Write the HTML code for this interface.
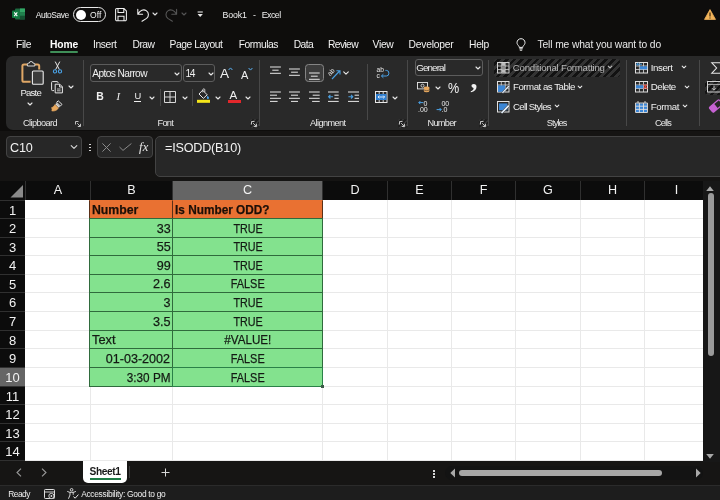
<!DOCTYPE html>
<html><head><meta charset="utf-8"><title>Book1 - Excel</title>
<style>
*{box-sizing:border-box;margin:0;padding:0}
html,body{width:720px;height:500px;overflow:hidden;background:#0e0d0c;font-family:"Liberation Sans",sans-serif;color:#fff}
#app{will-change:transform;position:relative;width:720px;height:500px;overflow:hidden;background:#0e0d0c}
.t{position:absolute;white-space:nowrap;line-height:1}
svg{position:absolute;overflow:visible}
/* grid */
#grid{position:absolute;left:0;top:181px;width:703px;height:280px;background:#fff;overflow:hidden}
.corner{position:absolute;left:0;top:0;width:25px;height:19px;background:#0c0c0c}
.corner svg{left:0;top:0}
.ch{position:absolute;top:0;height:19px;background:#0c0c0c;color:#f2f2f2;font-size:12.6px;text-align:center;line-height:19px;border-left:1px solid #303030}
.ch.sel{background:#656565}
.rh{position:absolute;left:0;width:25px;background:#0c0c0c;color:#f2f2f2;font-size:13px;text-align:center;border-top:1px solid #303030}
.rh.sel{background:#656565}
.vl{position:absolute;width:1px;background:#e9e9e9;top:19px;bottom:0}
.hl{position:absolute;height:1px;background:#e9e9e9;left:25px;right:0}
.c{position:absolute;font-size:13.3px;color:#141a14;white-space:nowrap;overflow:hidden;border:1px solid #2f6a3c;padding:0 1.5px 0 2px}
.c span{display:inline-block;-webkit-text-stroke:0.25px #141a14}
.c.hd{background:#e97132;color:#1f0d05;font-weight:bold;border-top-color:#e97132;border-color:#5a3018;border-top-color:#e97132}
.c.gr{background:#83e28e}
.c.r{text-align:right}.c.m{text-align:center}.c.l{text-align:left}
.selbox{position:absolute;border:1px solid #2a8148}
.handle{position:absolute;width:3px;height:3px;background:#3c5a48}
/* ribbon */
.rbg{position:absolute;left:6px;top:55.5px;width:730px;height:74.5px;background:#292929;border-radius:7px 0 0 7px}
.sep{position:absolute;width:1px;background:#484848}
.cbx{position:absolute;border:1px solid #5c5c5c;border-radius:3px;background:#292929}
.cbx.selbtn{background:#3c3c3c;border-color:#858585;border-radius:3.5px}
.hatch{position:absolute;border-radius:3px;background:repeating-linear-gradient(135deg,#333 0 2.8px,#121212 2.8px 5.4px)}
.fbox{position:absolute;background:#272727;border:1px solid #434343;border-radius:4px}
.sbbg{position:absolute;left:0;top:461px;width:720px;height:24px;background:#161514}
.stab{position:absolute;left:83px;top:461px;width:44px;height:22px;background:#fff;border-radius:0 0 5px 5px}
.stbg{position:absolute;left:0;top:485px;width:720px;height:15px;background:#1d1d1d;border-top:1px solid #2b2b2b}
.hatch2{position:absolute;border-radius:2px;background:repeating-linear-gradient(135deg,#353535 0 1.6px,#1f1f1f 1.6px 3.2px)}

</style></head><body><div id="app">
<div id="title">
<svg style="left:12px;top:8px" width="13" height="12" viewBox="0 0 13 12"><rect x="3" y="0.5" width="10" height="11" rx="1" fill="#1d6b41"/><rect x="8" y="0.5" width="5" height="3.7" fill="#33a867"/><rect x="8" y="4.2" width="5" height="3.6" fill="#21824e"/><rect x="8" y="7.8" width="5" height="3.7" fill="#155232"/><rect x="0" y="2.5" width="7.5" height="7.5" rx="0.8" fill="#107c41"/><path d="M2.2 4.3 L5.3 8.2 M5.3 4.3 L2.2 8.2" stroke="#fff" stroke-width="1.1"/></svg>
<div class="t" style="left:35.8px;top:11.4px;font-size:8.5px;color:#f0f0f0;letter-spacing:-0.48px;">AutoSave</div>
<div style="position:absolute;left:73px;top:7px;width:33px;height:15px;border:1px solid #e8e8e8;border-radius:8px"></div>
<div style="position:absolute;left:76px;top:9.5px;width:10px;height:10px;border-radius:5px;background:#fff"></div>
<div class="t" style="left:90.0px;top:11.4px;font-size:8.5px;color:#f0f0f0;letter-spacing:0.11px;">Off</div>
<svg style="left:115px;top:7.5px" width="12" height="13.4" viewBox="0 0 12 13.4"><path d="M0.6 1.8 a1.2 1.2 0 0 1 1.2 -1.2 H9 L11.4 3 V11.6 a1.2 1.2 0 0 1 -1.2 1.2 H1.8 a1.2 1.2 0 0 1 -1.2 -1.2 Z M3 0.8 V4.6 H8.8 V0.8 M3 12.6 V8.2 H9 V12.6" fill="none" stroke="#f0f0f0" stroke-width="1.05"/></svg>
<svg style="left:136.6px;top:7.5px" width="12.4" height="13.6" viewBox="0 0 12.4 13.6"><path d="M0.8 1.4 V6.2 H5.6 M1.2 5.8 C3 2.4 6.6 1 9.2 2.6 C12.2 4.4 12 8.4 9.6 10.4 L5 13.2" fill="none" stroke="#f0f0f0" stroke-width="1.1" stroke-linecap="round" stroke-linejoin="round"/></svg>
<svg style="left:150.7px;top:10.4px" width="8" height="8" viewBox="0 0 8 8"><path d="M2 3.0 L4 5.0 L6 3.0" fill="none" stroke="#e0e0e0" stroke-width="1.1" stroke-linecap="round" stroke-linejoin="round"/></svg>
<svg style="left:165.4px;top:7.5px" width="12.4" height="13.6" viewBox="0 0 12.4 13.6"><path d="M11.6 1.4 V6.2 H6.8 M11.2 5.8 C9.4 2.4 5.8 1 3.2 2.6 C0.2 4.4 0.4 8.4 2.8 10.4 L7.4 13.2" fill="none" stroke="#555" stroke-width="1.1" stroke-linecap="round" stroke-linejoin="round"/></svg>
<svg style="left:179.8px;top:10.4px" width="8" height="8" viewBox="0 0 8 8"><path d="M2 3.0 L4 5.0 L6 3.0" fill="none" stroke="#555" stroke-width="1.1" stroke-linecap="round" stroke-linejoin="round"/></svg>
<svg style="left:196.6px;top:11px" width="6.4" height="6.4" viewBox="0 0 6.4 6.4"><path d="M0.6 1 H5.8" stroke="#e8e8e8" stroke-width="1.1"/><path d="M0.6 3 H5.8 L3.2 6 Z" fill="#e8e8e8"/></svg>
<div class="t" style="left:222.5px;top:11.3px;font-size:8.8px;color:#f0f0f0;letter-spacing:-0.13px;">Book1</div>
<div class="t" style="left:253.0px;top:11.3px;font-size:8.8px;color:#f0f0f0;letter-spacing:0.00px;">-</div>
<div class="t" style="left:261.8px;top:11.3px;font-size:8.8px;color:#f0f0f0;letter-spacing:-0.54px;">Excel</div>
<svg style="left:704px;top:8.5px" width="12" height="11" viewBox="0 0 12 11"><path d="M6 0.6 L11.5 10.4 H0.5 Z" fill="#f2b45a" stroke="#f2b45a" stroke-width="0.8" stroke-linejoin="round"/><path d="M6 3.6 V7.4 M6 8.4 V9.5" stroke="#2a1a05" stroke-width="1.1"/></svg>
</div>
<div id="tabs">
<div class="t" style="left:16.0px;top:40.1px;font-size:10.3px;color:#f2f2f2;letter-spacing:-0.40px;">File</div>
<div class="t" style="left:93.0px;top:40.1px;font-size:10.3px;color:#f2f2f2;letter-spacing:-0.38px;">Insert</div>
<div class="t" style="left:132.5px;top:40.1px;font-size:10.3px;color:#f2f2f2;letter-spacing:-0.51px;">Draw</div>
<div class="t" style="left:169.5px;top:40.1px;font-size:10.3px;color:#f2f2f2;letter-spacing:-0.44px;">Page Layout</div>
<div class="t" style="left:238.8px;top:40.1px;font-size:10.3px;color:#f2f2f2;letter-spacing:-0.47px;">Formulas</div>
<div class="t" style="left:293.8px;top:40.1px;font-size:10.3px;color:#f2f2f2;letter-spacing:-0.64px;">Data</div>
<div class="t" style="left:328.0px;top:40.1px;font-size:10.3px;color:#f2f2f2;letter-spacing:-0.63px;">Review</div>
<div class="t" style="left:372.5px;top:40.1px;font-size:10.3px;color:#f2f2f2;letter-spacing:-0.29px;">View</div>
<div class="t" style="left:408.5px;top:40.1px;font-size:10.3px;color:#f2f2f2;letter-spacing:-0.22px;">Developer</div>
<div class="t" style="left:469.0px;top:40.1px;font-size:10.3px;color:#f2f2f2;letter-spacing:-0.30px;">Help</div>
<div class="t" style="left:50.0px;top:40.1px;font-size:10.3px;color:#ffffff;letter-spacing:-0.15px;font-weight:bold;">Home</div>
<div style="position:absolute;left:50px;top:51px;width:28px;height:2px;border-radius:1px;background:#3f8f58"></div>
<svg style="left:516px;top:38px" width="10" height="13" viewBox="0 0 10 13"><path d="M5 0.7 C2.6 0.7 1 2.5 1 4.6 C1 6 1.8 7 2.6 7.8 C3 8.3 3.2 8.8 3.2 9.4 H6.8 C6.8 8.8 7 8.3 7.4 7.8 C8.2 7 9 6 9 4.6 C9 2.5 7.4 0.7 5 0.7 Z M3.3 10.8 H6.7 M3.8 12.2 H6.2" fill="none" stroke="#f0f0f0" stroke-width="1"/></svg>
<div class="t" style="left:537.5px;top:40.1px;font-size:10.3px;color:#e8e8e8;letter-spacing:-0.13px;">Tell me what you want to do</div>
</div>
<div id="ribbon">
<div class="rbg"></div>
<svg style="left:20.5px;top:61px" width="23" height="24" viewBox="0 0 23 24"><path d="M6.6 3.4 H3 a1.6 1.6 0 0 0 -1.6 1.6 V19.2 a1.6 1.6 0 0 0 1.6 1.6 H9.6" fill="none" stroke="#dfa766" stroke-width="2"/><path d="M13.6 3.4 H16.6 a1.6 1.6 0 0 1 1.6 1.6 V8.6" fill="none" stroke="#dfa766" stroke-width="2"/><path d="M6.4 5 V3.2 a1 1 0 0 1 1 -1 H8.2 a1.9 1.7 0 0 1 3.8 0 H12.8 a1 1 0 0 1 1 1 V5 Z" fill="#292929" stroke="#d8d8d8" stroke-width="1"/><rect x="11.4" y="10" width="10.8" height="13.2" rx="1" fill="#3c3c3c" stroke="#ececec" stroke-width="1.1"/></svg>
<div class="t" style="left:20.5px;top:88.4px;font-size:9.6px;color:#f0f0f0;letter-spacing:-0.81px;">Paste</div>
<svg style="left:26px;top:100px" width="8" height="8" viewBox="0 0 8 8"><path d="M2 3.0 L4 5.0 L6 3.0" fill="none" stroke="#e8e8e8" stroke-width="1.1" stroke-linecap="round" stroke-linejoin="round"/></svg>
<svg style="left:53px;top:61px" width="9" height="13" viewBox="0 0 9 13"><path d="M2.2 0.6 L6.4 8.6 M6.8 0.6 L2.6 8.6" stroke="#e8e8e8" stroke-width="1" fill="none"/><circle cx="2" cy="10.4" r="1.6" fill="none" stroke="#4aa3e8" stroke-width="1.1"/><circle cx="7" cy="10.4" r="1.6" fill="none" stroke="#4aa3e8" stroke-width="1.1"/></svg>
<svg style="left:51px;top:80.5px" width="12" height="12.5" viewBox="0 0 12 12.5"><path d="M3 9.6 H1.4 a0.8 0.8 0 0 1 -0.8 -0.8 V1.4 a0.8 0.8 0 0 1 0.8 -0.8 H6.2 a0.8 0.8 0 0 1 0.8 0.8 V2" fill="none" stroke="#e8e8e8" stroke-width="1"/><path d="M4.2 3.2 H8.8 L11.4 5.8 V11.9 H4.2 Z M8.6 3.4 V6 H11.2" fill="none" stroke="#e8e8e8" stroke-width="1"/><path d="M6 8 H9.6 M6 9.8 H9.6" stroke="#e8e8e8" stroke-width="0.8"/></svg>
<svg style="left:67px;top:83px" width="8" height="8" viewBox="0 0 8 8"><path d="M2 3.0 L4 5.0 L6 3.0" fill="none" stroke="#e8e8e8" stroke-width="1.1" stroke-linecap="round" stroke-linejoin="round"/></svg>
<svg style="left:51px;top:100px" width="12" height="12" viewBox="0 0 12 12"><path d="M7.2 0.8 L11 4.4 L9.4 6 L5.6 2.4 Z" fill="none" stroke="#e8e8e8" stroke-width="1"/><path d="M5.4 3 L9 6.6 L7.8 7.8 L4.2 4.2 Z" fill="#d8d8d8"/><path d="M4 4.6 L7.4 8 C6.4 10 4 11.4 0.8 11 C1.6 9.6 0.6 8.6 0.6 7.6 C1.8 7.4 3 6.2 4 4.6 Z" fill="#e7a85e" stroke="#e7a85e" stroke-width="0.6"/></svg>
<div class="t" style="left:23.0px;top:118.7px;font-size:9.2px;color:#e8e8e8;letter-spacing:-0.60px;">Clipboard</div>
<svg style="left:75px;top:120.5px" width="6" height="6" viewBox="0 0 6 6"><path d="M0.5 3.5 V0.5 H3.5 M2.2 2.2 L5.2 5.2 M5.5 2.8 V5.5 H2.8" fill="none" stroke="#d4d4d4" stroke-width="0.9"/></svg>
<div class="sep" style="left:83px;top:60px;height:66px"></div>
<div class="cbx" style="left:90px;top:64px;width:92px;height:18px"></div>
<div class="t" style="left:92.2px;top:69.2px;font-size:10.2px;color:#f0f0f0;letter-spacing:-0.58px;">Aptos Narrow</div>
<svg style="left:172.5px;top:69.5px" width="8" height="8" viewBox="0 0 8 8"><path d="M2 3.0 L4 5.0 L6 3.0" fill="none" stroke="#e8e8e8" stroke-width="1.1" stroke-linecap="round" stroke-linejoin="round"/></svg>
<div class="cbx" style="left:183px;top:64px;width:32px;height:18px"></div>
<div class="t" style="left:185.6px;top:69.2px;font-size:10.2px;color:#f0f0f0;letter-spacing:-1.47px;">14</div>
<svg style="left:206.5px;top:69.5px" width="8" height="8" viewBox="0 0 8 8"><path d="M2 3.0 L4 5.0 L6 3.0" fill="none" stroke="#e8e8e8" stroke-width="1.1" stroke-linecap="round" stroke-linejoin="round"/></svg>
<div class="t" style="left:220.0px;top:66.5px;font-size:13.6px;color:#f0f0f0;letter-spacing:-0.27px;">A</div>
<svg style="left:228.2px;top:66.8px" width="5" height="4" viewBox="0 0 5 4"><path d="M0.6 3 L2.5 0.9 L4.4 3" fill="none" stroke="#5ab0f0" stroke-width="1"/></svg>
<div class="t" style="left:241.0px;top:69.5px;font-size:11px;color:#f0f0f0;letter-spacing:-0.34px;">A</div>
<svg style="left:248px;top:67.3px" width="5" height="4" viewBox="0 0 5 4"><path d="M0.6 1 L2.5 3.1 L4.4 1" fill="none" stroke="#5ab0f0" stroke-width="1"/></svg>
<div class="t" style="left:96.2px;top:92.0px;font-size:10.4px;color:#f0f0f0;letter-spacing:-1.71px;font-weight:bold;">B</div>
<div class="t" style="left:116.6px;top:91.9px;font-size:10.6px;color:#f0f0f0;letter-spacing:0.00px;font-style:italic;font-family:'Liberation Serif',serif;">I</div>
<div class="t" style="left:134.6px;top:92.0px;font-size:9.3px;color:#f0f0f0;letter-spacing:0.00px;">U</div>
<div style="position:absolute;left:134px;top:101px;width:6.8px;height:1px;background:#f0f0f0"></div>
<svg style="left:148px;top:93.5px" width="8" height="8" viewBox="0 0 8 8"><path d="M2 3.0 L4 5.0 L6 3.0" fill="none" stroke="#e8e8e8" stroke-width="1.1" stroke-linecap="round" stroke-linejoin="round"/></svg>
<div class="sep" style="left:160px;top:89px;height:17px"></div>
<svg style="left:164.2px;top:91px" width="12" height="12" viewBox="0 0 12 12"><path d="M0.5 0.5 H11.5 V11.5 H0.5 Z M6 0.5 V11.5 M0.5 6 H11.5" fill="none" stroke="#d8d8d8" stroke-width="1"/><path d="M2.5 0.5 H4 M8 0.5 H9.5" stroke="#292929" stroke-width="0"/></svg>
<svg style="left:181px;top:93.5px" width="8" height="8" viewBox="0 0 8 8"><path d="M2 3.0 L4 5.0 L6 3.0" fill="none" stroke="#e8e8e8" stroke-width="1.1" stroke-linecap="round" stroke-linejoin="round"/></svg>
<div class="sep" style="left:192px;top:89px;height:17px"></div>
<svg style="left:197px;top:88.9px" width="13.5" height="14" viewBox="0 0 13.5 14"><path d="M5.6 1.2 L10.2 5.8 L6.4 9.4 L2 5 Z" fill="none" stroke="#e8e8e8" stroke-width="1" stroke-linejoin="round"/><path d="M5.8 3.4 V0.8 a1 1 0 0 1 2 0 V3" fill="none" stroke="#e8e8e8" stroke-width="0.8"/><path d="M10.6 6.4 C11.6 7.8 12 8.4 12 9 a1.1 1.1 0 0 1 -2.2 0 C9.8 8.4 10 7.8 10.6 6.4 Z" fill="#4aa3e8"/><rect x="0" y="10.8" width="13" height="3" fill="#f5e61a"/></svg>
<svg style="left:213.5px;top:93.5px" width="8" height="8" viewBox="0 0 8 8"><path d="M2 3.0 L4 5.0 L6 3.0" fill="none" stroke="#e8e8e8" stroke-width="1.1" stroke-linecap="round" stroke-linejoin="round"/></svg>
<div class="t" style="left:229.5px;top:90.0px;font-size:11.5px;color:#f0f0f0;letter-spacing:1.33px;">A</div>
<div style="position:absolute;left:228px;top:99.7px;width:12.6px;height:3px;background:#e2272b"></div>
<svg style="left:244px;top:93.5px" width="8" height="8" viewBox="0 0 8 8"><path d="M2 3.0 L4 5.0 L6 3.0" fill="none" stroke="#e8e8e8" stroke-width="1.1" stroke-linecap="round" stroke-linejoin="round"/></svg>
<div class="t" style="left:157.5px;top:118.7px;font-size:9.2px;color:#e8e8e8;letter-spacing:-0.73px;">Font</div>
<div class="hatch2" style="left:249.5px;top:119.0px;width:9px;height:9px"></div><svg style="left:251px;top:120.5px" width="6" height="6" viewBox="0 0 6 6"><path d="M0.5 3.5 V0.5 H3.5 M2.2 2.2 L5.2 5.2 M5.5 2.8 V5.5 H2.8" fill="none" stroke="#d4d4d4" stroke-width="0.9"/></svg>
<div class="sep" style="left:259px;top:60px;height:66px"></div>
<svg style="left:269.6px;top:66.4px" width="11" height="8" viewBox="0 0 11 8"><path d="M0.0 1.0 h10.9 M2.3 4.2 h6.3 M0.0 7.3 h10.9 " stroke="#e8e8e8" stroke-width="1.0" fill="none"/></svg>
<svg style="left:289px;top:68.4px" width="11" height="8" viewBox="0 0 11 8"><path d="M0.0 1.0 h10.9 M2.1 4.2 h6.8 M0.0 7.3 h10.9 " stroke="#e8e8e8" stroke-width="1.0" fill="none"/></svg>
<div class="cbx selbtn" style="left:305.3px;top:64.2px;width:18.4px;height:17.8px"></div>
<svg style="left:309px;top:71.6px" width="11" height="8" viewBox="0 0 11 8"><path d="M0.0 1.0 h10.7 M1.9 4.2 h6.8 M0.0 7.3 h10.7 " stroke="#e8e8e8" stroke-width="1.0" fill="none"/></svg>
<svg style="left:328px;top:66.5px" width="13" height="13" viewBox="0 0 13 13"><text x="0.2" y="7.4" font-family="Liberation Sans, sans-serif" font-size="6.6" fill="#e8e8e8" transform="rotate(-50 3.2 6)">ab</text><path d="M4 12 L11.6 4 M12 7.4 V3.8 H8.4" fill="none" stroke="#4a9fe0" stroke-width="1.1"/></svg>
<svg style="left:342.4px;top:69.4px" width="8" height="8" viewBox="0 0 8 8"><path d="M1.7000000000000002 2.85 L4 5.15 L6.3 2.85" fill="none" stroke="#e8e8e8" stroke-width="1.1" stroke-linecap="round" stroke-linejoin="round"/></svg>
<svg style="left:269.6px;top:91px" width="11" height="12" viewBox="0 0 11 12"><path d="M0.0 1.0 h10.9 M0.0 4.2 h7 M0.0 7.3 h10.9 M0.0 10.4 h7.6 " stroke="#e8e8e8" stroke-width="1.0" fill="none"/></svg>
<svg style="left:289px;top:91px" width="11" height="12" viewBox="0 0 11 12"><path d="M0.0 1.0 h10.9 M2.0 4.2 h7 M0.0 7.3 h10.9 M2.0 10.4 h7 " stroke="#e8e8e8" stroke-width="1.0" fill="none"/></svg>
<svg style="left:309px;top:91px" width="11" height="12" viewBox="0 0 11 12"><path d="M0.0 1.0 h10.7 M3.7 4.2 h7 M0.0 7.3 h10.7 M3.1 10.4 h7.6 " stroke="#e8e8e8" stroke-width="1.0" fill="none"/></svg>
<svg style="left:328.4px;top:91px" width="11" height="12" viewBox="0 0 11 12"><path d="M0.0 1.0 h10.7 " stroke="#e8e8e8" stroke-width="1.0" fill="none"/><path d="M6.4 4.2 h4.3 M6.4 7.3 h4.3 " stroke="#e8e8e8" stroke-width="1.0" fill="none"/><path d="M0.0 10.4 h10.7 " stroke="#e8e8e8" stroke-width="1.0" fill="none"/><path d="M5 5.7 H0.6 M2.4 3.9 L0.6 5.7 L2.4 7.5" fill="none" stroke="#4a9fe0" stroke-width="1.1"/></svg>
<svg style="left:348px;top:91px" width="11" height="12" viewBox="0 0 11 12"><path d="M0.0 1.0 h11 " stroke="#e8e8e8" stroke-width="1.0" fill="none"/><path d="M6.6 4.2 h4.4 M6.6 7.3 h4.4 " stroke="#e8e8e8" stroke-width="1.0" fill="none"/><path d="M0.0 10.4 h11 " stroke="#e8e8e8" stroke-width="1.0" fill="none"/><path d="M0.4 5.7 H4.8 M3 3.9 L4.8 5.7 L3 7.5" fill="none" stroke="#4a9fe0" stroke-width="1.1"/></svg>
<div class="t" style="left:310.0px;top:118.7px;font-size:9.2px;color:#e8e8e8;letter-spacing:-0.60px;">Alignment</div>
<div class="sep" style="left:367px;top:64px;height:56px"></div>
<svg style="left:376px;top:66.5px" width="13" height="14" viewBox="0 0 13 14"><text x="0.5" y="5.4" font-family="Liberation Sans, sans-serif" font-size="6.6" fill="#e8e8e8">ab</text><text x="0.5" y="11.2" font-family="Liberation Sans, sans-serif" font-size="6.6" fill="#e8e8e8">c</text><path d="M9.4 3.4 H10.4 a1.8 2 0 0 1 0 5.6 H5.6 M7.4 7.2 L5.4 9 L7.4 10.8" fill="none" stroke="#4aa3e8" stroke-width="1"/></svg>
<svg style="left:375px;top:91px" width="12.5" height="12" viewBox="0 0 12.5 12"><rect x="0.5" y="0.5" width="11.5" height="11" fill="none" stroke="#e8e8e8" stroke-width="1"/><path d="M4.2 0.5 V3 M8.2 0.5 V3 M4.2 9 V11.5 M8.2 9 V11.5" stroke="#e8e8e8" stroke-width="0.9"/><rect x="1" y="3" width="10.5" height="6" fill="#2f7fd0"/><path d="M3 6 H9.6 M4.4 4.6 L3 6 L4.4 7.4 M8.2 4.6 L9.6 6 L8.2 7.4" fill="none" stroke="#e8f2ff" stroke-width="0.9"/></svg>
<svg style="left:391px;top:93.5px" width="8" height="8" viewBox="0 0 8 8"><path d="M2 3.0 L4 5.0 L6 3.0" fill="none" stroke="#e8e8e8" stroke-width="1.1" stroke-linecap="round" stroke-linejoin="round"/></svg>
<div class="hatch2" style="left:397.5px;top:119.0px;width:9px;height:9px"></div><svg style="left:399px;top:120.5px" width="6" height="6" viewBox="0 0 6 6"><path d="M0.5 3.5 V0.5 H3.5 M2.2 2.2 L5.2 5.2 M5.5 2.8 V5.5 H2.8" fill="none" stroke="#d4d4d4" stroke-width="0.9"/></svg>
<div class="sep" style="left:407px;top:60px;height:66px"></div>
<div class="cbx" style="left:414.5px;top:59px;width:68px;height:16.5px"></div>
<div class="t" style="left:416.2px;top:63.0px;font-size:9.8px;color:#f0f0f0;letter-spacing:-0.87px;">General</div>
<svg style="left:473.5px;top:63.5px" width="8" height="8" viewBox="0 0 8 8"><path d="M2 3.0 L4 5.0 L6 3.0" fill="none" stroke="#e8e8e8" stroke-width="1.1" stroke-linecap="round" stroke-linejoin="round"/></svg>
<svg style="left:417px;top:81.5px" width="13" height="11" viewBox="0 0 13 11"><rect x="0.5" y="0.5" width="10" height="6.4" fill="none" stroke="#e8e8e8" stroke-width="0.9"/><circle cx="5.5" cy="3.7" r="1.5" fill="none" stroke="#e8e8e8" stroke-width="0.8"/><ellipse cx="9.6" cy="5.6" rx="2.8" ry="1.2" fill="#e7a85e"/><path d="M6.8 5.6 V9 a2.8 1.2 0 0 0 5.6 0 V5.6" fill="#e7a85e"/><path d="M6.8 7.4 a2.8 1.2 0 0 0 5.6 0" fill="none" stroke="#292929" stroke-width="0.5"/></svg>
<svg style="left:433.5px;top:83.5px" width="8" height="8" viewBox="0 0 8 8"><path d="M2 3.0 L4 5.0 L6 3.0" fill="none" stroke="#e8e8e8" stroke-width="1.1" stroke-linecap="round" stroke-linejoin="round"/></svg>
<div class="t" style="left:448.4px;top:80.7px;font-size:14px;color:#f0f0f0;letter-spacing:0.00px;transform:scaleX(0.9);transform-origin:left center;">%</div>
<div class="t" style="left:470.6px;top:64.5px;font-size:28px;color:#f0f0f0;letter-spacing:0.00px;font-weight:bold;font-family:'Liberation Serif',serif;">,</div>
<svg style="left:417.5px;top:99.5px" width="13" height="13" viewBox="0 0 13 13"><path d="M5.4 2.6 H0.8 M2.4 1 L0.8 2.6 L2.4 4.2" fill="none" stroke="#4aa3e8" stroke-width="1"/><text x="5.6" y="5.6" font-family="Liberation Sans, sans-serif" font-size="7" fill="#e8e8e8">0</text><text x="0" y="12.4" font-family="Liberation Sans, sans-serif" font-size="7" fill="#e8e8e8">.00</text></svg>
<svg style="left:436px;top:99.5px" width="14" height="13" viewBox="0 0 14 13"><text x="5.4" y="5.6" font-family="Liberation Sans, sans-serif" font-size="7" fill="#e8e8e8">00</text><path d="M0.6 9.6 H5.2 M3.6 8 L5.2 9.6 L3.6 11.2" fill="none" stroke="#4aa3e8" stroke-width="1"/><text x="5.6" y="12.4" font-family="Liberation Sans, sans-serif" font-size="7" fill="#e8e8e8">.0</text></svg>
<div class="t" style="left:427.5px;top:118.7px;font-size:9.2px;color:#e8e8e8;letter-spacing:-0.70px;">Number</div>
<div class="hatch2" style="left:478.5px;top:119.0px;width:9px;height:9px"></div><svg style="left:480px;top:120.5px" width="6" height="6" viewBox="0 0 6 6"><path d="M0.5 3.5 V0.5 H3.5 M2.2 2.2 L5.2 5.2 M5.5 2.8 V5.5 H2.8" fill="none" stroke="#d4d4d4" stroke-width="0.9"/></svg>
<div class="sep" style="left:488px;top:60px;height:66px"></div>
<div class="hatch" style="left:494.4px;top:58.6px;width:125.8px;height:18px"></div>
<svg style="left:496.7px;top:61.5px" width="12.5" height="11.5" viewBox="0 0 12.5 11.5"><rect x="0.5" y="0.5" width="11.5" height="10.5" fill="none" stroke="#cfcfcf" stroke-width="1"/><path d="M0.5 4 H12 M0.5 7.5 H12 M4.3 0.5 V11 M8.2 0.5 V11" stroke="#cfcfcf" stroke-width="0.8"/><rect x="4.6" y="1" width="3.4" height="2.8" fill="#bdbdbd"/><rect x="4.6" y="4.4" width="3.4" height="2.8" fill="#8d8d8d"/><rect x="4.6" y="7.9" width="3.4" height="2.8" fill="#bdbdbd"/></svg>
<div class="t" style="left:512.8px;top:62.9px;font-size:9.7px;color:#b8b8b8;letter-spacing:-0.25px;">Conditional Formatting</div>
<svg style="left:605.8px;top:63.400000000000006px" width="8" height="8" viewBox="0 0 8 8"><path d="M2.2 3.1 L4 4.9 L5.8 3.1" fill="none" stroke="#b8b8b8" stroke-width="1.1" stroke-linecap="round" stroke-linejoin="round"/></svg>
<svg style="left:496.7px;top:81px" width="12.5" height="12" viewBox="0 0 12.5 12"><rect x="0.5" y="0.5" width="11.5" height="10.5" fill="none" stroke="#e0e0e0" stroke-width="1"/><path d="M0.5 4 H12 M0.5 7.5 H12 M4.3 0.5 V11 M8.2 0.5 V11" stroke="#e0e0e0" stroke-width="0.8"/><rect x="1" y="4.4" width="7" height="6.4" fill="#3b86d6"/><path d="M4.6 11.6 L11.4 4.2 L12.8 5.6 L6 12.6 Z" fill="#dfe9f5" stroke="#292929" stroke-width="0.5"/></svg>
<div class="t" style="left:513.0px;top:82.4px;font-size:9.7px;color:#f0f0f0;letter-spacing:-0.49px;">Format as Table</div>
<svg style="left:576px;top:83px" width="8" height="8" viewBox="0 0 8 8"><path d="M2.2 3.1 L4 4.9 L5.8 3.1" fill="none" stroke="#e8e8e8" stroke-width="1.1" stroke-linecap="round" stroke-linejoin="round"/></svg>
<svg style="left:496.7px;top:100.5px" width="12.5" height="12" viewBox="0 0 12.5 12"><rect x="0.5" y="0.5" width="11.5" height="10.5" fill="none" stroke="#e0e0e0" stroke-width="1"/><rect x="2" y="2.4" width="8.4" height="6.8" fill="#3b86d6"/><path d="M3.6 11.6 L11.2 3.6 L12.8 5.2 L5.2 12.8 Z" fill="#dfe9f5" stroke="#292929" stroke-width="0.5"/></svg>
<div class="t" style="left:513.0px;top:101.8px;font-size:9.7px;color:#f0f0f0;letter-spacing:-0.71px;">Cell Styles</div>
<svg style="left:552.8px;top:102.4px" width="8" height="8" viewBox="0 0 8 8"><path d="M2.2 3.1 L4 4.9 L5.8 3.1" fill="none" stroke="#e8e8e8" stroke-width="1.1" stroke-linecap="round" stroke-linejoin="round"/></svg>
<div class="t" style="left:546.8px;top:118.7px;font-size:9.2px;color:#e8e8e8;letter-spacing:-0.89px;">Styles</div>
<div class="sep" style="left:626px;top:60px;height:66px"></div>
<svg style="left:634.5px;top:61.5px" width="13" height="12" viewBox="0 0 13 12"><rect x="0.5" y="0.5" width="12" height="10.5" fill="none" stroke="#e0e0e0" stroke-width="1"/><path d="M0.5 4 H12.5 M0.5 7.5 H12.5 M4.4 0.5 V11 M8.5 0.5 V11" stroke="#e0e0e0" stroke-width="0.8"/><rect x="4.8" y="4.3" width="7.4" height="3" fill="#3b86d6"/><path d="M7 2.2 H1.6 M3.2 0.6 L1.6 2.2 L3.2 3.8" fill="none" stroke="#4aa3e8" stroke-width="1"/></svg>
<div class="t" style="left:650.8px;top:62.9px;font-size:9.7px;color:#f0f0f0;letter-spacing:-0.44px;">Insert</div>
<svg style="left:680px;top:63.400000000000006px" width="8" height="8" viewBox="0 0 8 8"><path d="M2.2 3.1 L4 4.9 L5.8 3.1" fill="none" stroke="#e8e8e8" stroke-width="1.1" stroke-linecap="round" stroke-linejoin="round"/></svg>
<svg style="left:634.5px;top:81px" width="13" height="12" viewBox="0 0 13 12"><rect x="0.5" y="0.5" width="12" height="10.5" fill="none" stroke="#e0e0e0" stroke-width="1"/><path d="M0.5 4 H12.5 M0.5 7.5 H12.5 M4.4 0.5 V11 M8.5 0.5 V11" stroke="#e0e0e0" stroke-width="0.8"/><rect x="0.9" y="4.3" width="7.4" height="3" fill="#3b86d6"/><path d="M8.6 3.4 L12.2 8 M12.2 3.4 L8.6 8" fill="none" stroke="#e0483e" stroke-width="1.2"/></svg>
<div class="t" style="left:650.8px;top:82.4px;font-size:9.7px;color:#f0f0f0;letter-spacing:-0.52px;">Delete</div>
<svg style="left:683.3px;top:83px" width="8" height="8" viewBox="0 0 8 8"><path d="M2.2 3.1 L4 4.9 L5.8 3.1" fill="none" stroke="#e8e8e8" stroke-width="1.1" stroke-linecap="round" stroke-linejoin="round"/></svg>
<svg style="left:634.5px;top:100.5px" width="13" height="12" viewBox="0 0 13 12"><rect x="1" y="2.4" width="11" height="9" fill="#3b86d6"/><path d="M0.5 2 H12.5 V11.5 H0.5 Z M0.5 5.2 H12.5 M0.5 8.4 H12.5 M4.4 2 V11.5 M8.5 2 V11.5 M3 0 V2 M10 0 V2" fill="none" stroke="#e0e0e0" stroke-width="0.9"/></svg>
<div class="t" style="left:650.8px;top:101.8px;font-size:9.7px;color:#f0f0f0;letter-spacing:-0.42px;">Format</div>
<svg style="left:680.5px;top:102.4px" width="8" height="8" viewBox="0 0 8 8"><path d="M2.2 3.1 L4 4.9 L5.8 3.1" fill="none" stroke="#e8e8e8" stroke-width="1.1" stroke-linecap="round" stroke-linejoin="round"/></svg>
<div class="t" style="left:654.9px;top:118.7px;font-size:9.2px;color:#e8e8e8;letter-spacing:-0.87px;">Cells</div>
<div class="sep" style="left:699px;top:60px;height:66px"></div>
<svg style="left:710.5px;top:61.5px" width="10" height="12" viewBox="0 0 10 12"><path d="M9.5 2.6 V0.8 H0.8 L5.6 6 L0.8 11.2 H9.5 V9.4" fill="none" stroke="#e8e8e8" stroke-width="1.1"/></svg>
<div class="hatch" style="left:705px;top:79.5px;width:20px;height:15px"></div>
<svg style="left:707px;top:81px" width="14" height="12" viewBox="0 0 14 12"><rect x="0.5" y="0.5" width="14" height="10.5" fill="none" stroke="#d0d0d0" stroke-width="1"/><path d="M0.5 3.4 H14" stroke="#d0d0d0" stroke-width="0.8"/><path d="M7 4.4 V9 M5 7.2 L7 9.2 L9 7.2" fill="none" stroke="#d0d0d0" stroke-width="0.9"/></svg>
<svg style="left:708.5px;top:99px" width="14" height="14" viewBox="0 0 14 14"><g transform="rotate(-40 7 7)"><rect x="0.6" y="3.8" width="12.8" height="6.4" rx="1.2" fill="none" stroke="#c763d4" stroke-width="1.2"/><rect x="0.6" y="3.8" width="6.4" height="6.4" rx="1" fill="#c763d4"/></g></svg>
</div>
<div id="fbar">
<div style="position:absolute;left:0;top:131px;width:720px;height:50px;background:#151413"></div>
<div class="fbox" style="left:6px;top:136px;width:76px;height:21.5px"></div>
<div class="t" style="left:10.0px;top:141.7px;font-size:12.6px;color:#f2f2f2;letter-spacing:-0.21px;">C10</div>
<svg style="left:70px;top:143px" width="8" height="8" viewBox="0 0 8 8"><path d="M1.2000000000000002 2.6 L4 5.4 L6.8 2.6" fill="none" stroke="#d8d8d8" stroke-width="1.1" stroke-linecap="round" stroke-linejoin="round"/></svg>
<div style="position:absolute;left:89.2px;top:143.6px;width:1.8px;height:1.8px;background:#d8d8d8"></div>
<div style="position:absolute;left:89.2px;top:146.6px;width:1.8px;height:1.8px;background:#d8d8d8"></div>
<div style="position:absolute;left:89.2px;top:149.6px;width:1.8px;height:1.8px;background:#d8d8d8"></div>
<div class="fbox" style="left:97px;top:136px;width:56px;height:21.5px"></div>
<svg style="left:102.4px;top:142.6px" width="9" height="9" viewBox="0 0 9 9"><path d="M0.4 0.4 L8.6 8.6 M8.6 0.4 L0.4 8.6" stroke="#8a8a8a" stroke-width="1" fill="none"/></svg>
<svg style="left:118.6px;top:143.2px" width="13" height="8" viewBox="0 0 13 8"><path d="M0.5 4 L4 7.4 L12.4 0.5" stroke="#8a8a8a" stroke-width="1" fill="none"/></svg>
<div class="t" style="left:139.0px;top:140.8px;font-size:12.6px;color:#e8e8e8;letter-spacing:0.35px;font-style:italic;font-family:'Liberation Serif',serif;">fx</div>
<div class="fbox" style="left:155px;top:136px;width:580px;height:41px;border-radius:5px"></div>
<div class="t" style="left:165.0px;top:141.7px;font-size:12.6px;color:#f2f2f2;letter-spacing:-0.19px;">=ISODD(B10)</div>
</div>
<div id="grid">
<div class="corner"><svg width="25" height="19" viewBox="0 0 25 19"><path d="M23 4 V16.5 H10.5 Z" fill="#8a8a8a"/></svg></div>
<div class="ch" style="left:25px;width:65px">A</div>
<div class="ch" style="left:90px;width:82px">B</div>
<div class="ch sel" style="left:172px;width:150px">C</div>
<div class="ch" style="left:322px;width:65px">D</div>
<div class="ch" style="left:387px;width:64px">E</div>
<div class="ch" style="left:451px;width:64px">F</div>
<div class="ch" style="left:515px;width:65px">G</div>
<div class="ch" style="left:580px;width:64px">H</div>
<div class="ch" style="left:644px;width:64px">I</div>
<div class="vl" style="left:90px"></div>
<div class="vl" style="left:172px"></div>
<div class="vl" style="left:322px"></div>
<div class="vl" style="left:387px"></div>
<div class="vl" style="left:451px"></div>
<div class="vl" style="left:515px"></div>
<div class="vl" style="left:580px"></div>
<div class="vl" style="left:644px"></div>
<div class="hl" style="top:37px"></div>
<div class="hl" style="top:56px"></div>
<div class="hl" style="top:74px"></div>
<div class="hl" style="top:93px"></div>
<div class="hl" style="top:111px"></div>
<div class="hl" style="top:130px"></div>
<div class="hl" style="top:149px"></div>
<div class="hl" style="top:167px"></div>
<div class="hl" style="top:186px"></div>
<div class="hl" style="top:205px"></div>
<div class="hl" style="top:223px"></div>
<div class="hl" style="top:242px"></div>
<div class="hl" style="top:260px"></div>
<div class="hl" style="top:279px"></div>
<div class="rh" style="top:19px;height:18px;line-height:19px">1</div>
<div class="rh" style="top:37px;height:19px;line-height:20px">2</div>
<div class="rh" style="top:56px;height:18px;line-height:19px">3</div>
<div class="rh" style="top:74px;height:19px;line-height:20px">4</div>
<div class="rh" style="top:93px;height:18px;line-height:19px">5</div>
<div class="rh" style="top:111px;height:19px;line-height:20px">6</div>
<div class="rh" style="top:130px;height:19px;line-height:20px">7</div>
<div class="rh" style="top:149px;height:18px;line-height:19px">8</div>
<div class="rh" style="top:167px;height:19px;line-height:20px">9</div>
<div class="rh sel" style="top:186px;height:19px;line-height:20px">10</div>
<div class="rh" style="top:205px;height:18px;line-height:19px">11</div>
<div class="rh" style="top:223px;height:19px;line-height:20px">12</div>
<div class="rh" style="top:242px;height:18px;line-height:19px">13</div>
<div class="rh" style="top:260px;height:19px;line-height:20px">14</div>
<div class="rh" style="top:279px;height:18px;line-height:19px">15</div>
<div class="c hd l" style="left:89px;top:19px;width:84px;height:19px;line-height:18px"><span style="transform:scaleX(0.923);transform-origin:left center">Number</span></div>
<div class="c hd l" style="left:172px;top:19px;width:151px;height:19px;line-height:18px"><span style="transform:scaleX(0.889);transform-origin:left center">Is Number ODD?</span></div>
<div class="c gr r" style="left:89px;top:37px;width:84px;height:20px;line-height:19px"><span style="transform:scaleX(0.946);transform-origin:right center">33</span></div>
<div class="c gr m" style="left:172px;top:37px;width:151px;height:20px;line-height:19px"><span style="transform:scaleX(0.812);transform-origin:center center">TRUE</span></div>
<div class="c gr r" style="left:89px;top:56px;width:84px;height:19px;line-height:18px"><span style="transform:scaleX(0.946);transform-origin:right center">55</span></div>
<div class="c gr m" style="left:172px;top:56px;width:151px;height:19px;line-height:18px"><span style="transform:scaleX(0.812);transform-origin:center center">TRUE</span></div>
<div class="c gr r" style="left:89px;top:74px;width:84px;height:20px;line-height:19px"><span style="transform:scaleX(0.946);transform-origin:right center">99</span></div>
<div class="c gr m" style="left:172px;top:74px;width:151px;height:20px;line-height:19px"><span style="transform:scaleX(0.812);transform-origin:center center">TRUE</span></div>
<div class="c gr r" style="left:89px;top:93px;width:84px;height:19px;line-height:18px"><span style="transform:scaleX(0.952);transform-origin:right center">2.6</span></div>
<div class="c gr m" style="left:172px;top:93px;width:151px;height:19px;line-height:18px"><span style="transform:scaleX(0.821);transform-origin:center center">FALSE</span></div>
<div class="c gr r" style="left:89px;top:111px;width:84px;height:20px;line-height:19px"><span style="transform:scaleX(0.946);transform-origin:right center">3</span></div>
<div class="c gr m" style="left:172px;top:111px;width:151px;height:20px;line-height:19px"><span style="transform:scaleX(0.812);transform-origin:center center">TRUE</span></div>
<div class="c gr r" style="left:89px;top:130px;width:84px;height:20px;line-height:19px"><span style="transform:scaleX(0.952);transform-origin:right center">3.5</span></div>
<div class="c gr m" style="left:172px;top:130px;width:151px;height:20px;line-height:19px"><span style="transform:scaleX(0.812);transform-origin:center center">TRUE</span></div>
<div class="c gr l" style="left:89px;top:149px;width:84px;height:19px;line-height:18px"><span style="transform:scaleX(0.963);transform-origin:left center">Text</span></div>
<div class="c gr m" style="left:172px;top:149px;width:151px;height:19px;line-height:18px"><span style="transform:scaleX(0.875);transform-origin:center center">#VALUE!</span></div>
<div class="c gr r" style="left:89px;top:167px;width:84px;height:20px;line-height:19px"><span style="transform:scaleX(0.944);transform-origin:right center">01-03-2002</span></div>
<div class="c gr m" style="left:172px;top:167px;width:151px;height:20px;line-height:19px"><span style="transform:scaleX(0.821);transform-origin:center center">FALSE</span></div>
<div class="c gr r" style="left:89px;top:186px;width:84px;height:20px;line-height:19px"><span style="transform:scaleX(0.884);transform-origin:right center">3:30 PM</span></div>
<div class="c gr m" style="left:172px;top:186px;width:151px;height:20px;line-height:19px"><span style="transform:scaleX(0.821);transform-origin:center center">FALSE</span></div>
<div class="selbox" style="left:172px;top:186px;width:151px;height:20px"></div>
<div class="handle" style="left:321px;top:204px"></div>
</div>
<div id="sheetbar">
<div class="sbbg"></div>
<svg style="left:16px;top:468px" width="6" height="9" viewBox="0 0 6 9"><path d="M5 0.6 L1 4.5 L5 8.4" fill="none" stroke="#9a9a9a" stroke-width="1.1"/></svg>
<svg style="left:41px;top:468px" width="6" height="9" viewBox="0 0 6 9"><path d="M1 0.6 L5 4.5 L1 8.4" fill="none" stroke="#9a9a9a" stroke-width="1.1"/></svg>
<div class="stab"></div>
<div class="t" style="left:89.6px;top:466.9px;font-size:10.2px;color:#1a1a1a;letter-spacing:-0.41px;font-weight:bold;">Sheet1</div>
<div style="position:absolute;left:89.5px;top:478.4px;width:31.5px;height:1.6px;background:#1e7a45"></div>
<div style="position:absolute;left:129px;top:466px;width:1px;height:12px;background:#3a3a3a"></div>
<svg style="left:161px;top:467.5px" width="9" height="9" viewBox="0 0 9 9"><path d="M4.5 0.5 V8.5 M0.5 4.5 H8.5" stroke="#d8d8d8" stroke-width="1" fill="none"/></svg>
<div style="position:absolute;left:433px;top:470.2px;width:1.5px;height:1.5px;background:#d8d8d8"></div>
<div style="position:absolute;left:433px;top:473.2px;width:1.5px;height:1.5px;background:#d8d8d8"></div>
<div style="position:absolute;left:433px;top:476.2px;width:1.5px;height:1.5px;background:#d8d8d8"></div>
<div style="position:absolute;left:445px;top:466px;width:258px;height:14px;border-radius:7px;background:#131313"></div>
<svg style="left:449.5px;top:468px" width="5" height="10" viewBox="0 0 5 10"><path d="M5 0.4 V9.6 L0.3 5 Z" fill="#a8a8a8"/></svg>
<div style="position:absolute;left:459px;top:470px;width:203px;height:6px;border-radius:3px;background:#a6a6a6"></div>
<svg style="left:695.5px;top:468px" width="5" height="10" viewBox="0 0 5 10"><path d="M0 0.4 V9.6 L4.7 5 Z" fill="#a8a8a8"/></svg>
<div style="position:absolute;left:703px;top:181px;width:17px;height:281px;background:#171717"></div>
<svg style="left:706px;top:185.5px" width="8" height="5" viewBox="0 0 8 5"><path d="M0.2 5 H7.8 L4 0.3 Z" fill="#a8a8a8"/></svg>
<div style="position:absolute;left:708px;top:193px;width:5.5px;height:163px;border-radius:3px;background:#9a9a9a"></div>
<svg style="left:706px;top:453.5px" width="8" height="5" viewBox="0 0 8 5"><path d="M0.2 0 H7.8 L4 4.7 Z" fill="#a8a8a8"/></svg>
</div>
<div id="status">
<div class="stbg"></div>
<div class="t" style="left:8.3px;top:490.1px;font-size:8.4px;color:#f0f0f0;letter-spacing:-0.52px;">Ready</div>
<svg style="left:44px;top:488.5px" width="11" height="10" viewBox="0 0 11 10"><rect x="0.5" y="0.5" width="10" height="9" rx="0.8" fill="none" stroke="#e0e0e0" stroke-width="1"/><path d="M0.5 3 H10.5" stroke="#e0e0e0" stroke-width="0.9"/><circle cx="7.4" cy="7" r="2.6" fill="#1c1c1c" stroke="#e0e0e0" stroke-width="0.9"/><circle cx="7.4" cy="7" r="0.9" fill="#e0e0e0"/></svg>
<svg style="left:67px;top:488px" width="12" height="11" viewBox="0 0 12 11"><circle cx="4.6" cy="1.8" r="1.3" fill="none" stroke="#e8e8e8" stroke-width="0.9"/><path d="M0.6 3.6 C2.6 4.8 6.6 4.8 8.6 3.6 M3 4.6 V7 L1.6 10.4 M6.2 4.6 V6.4" fill="none" stroke="#e8e8e8" stroke-width="0.9" stroke-linecap="round"/><path d="M6.4 8.6 L8.2 10.2 L11.4 6.6" fill="none" stroke="#e8e8e8" stroke-width="1"/></svg>
<div class="t" style="left:81.2px;top:490.1px;font-size:8.4px;color:#f0f0f0;letter-spacing:-0.30px;">Accessibility: Good to go</div>
</div>
</div></body></html>
